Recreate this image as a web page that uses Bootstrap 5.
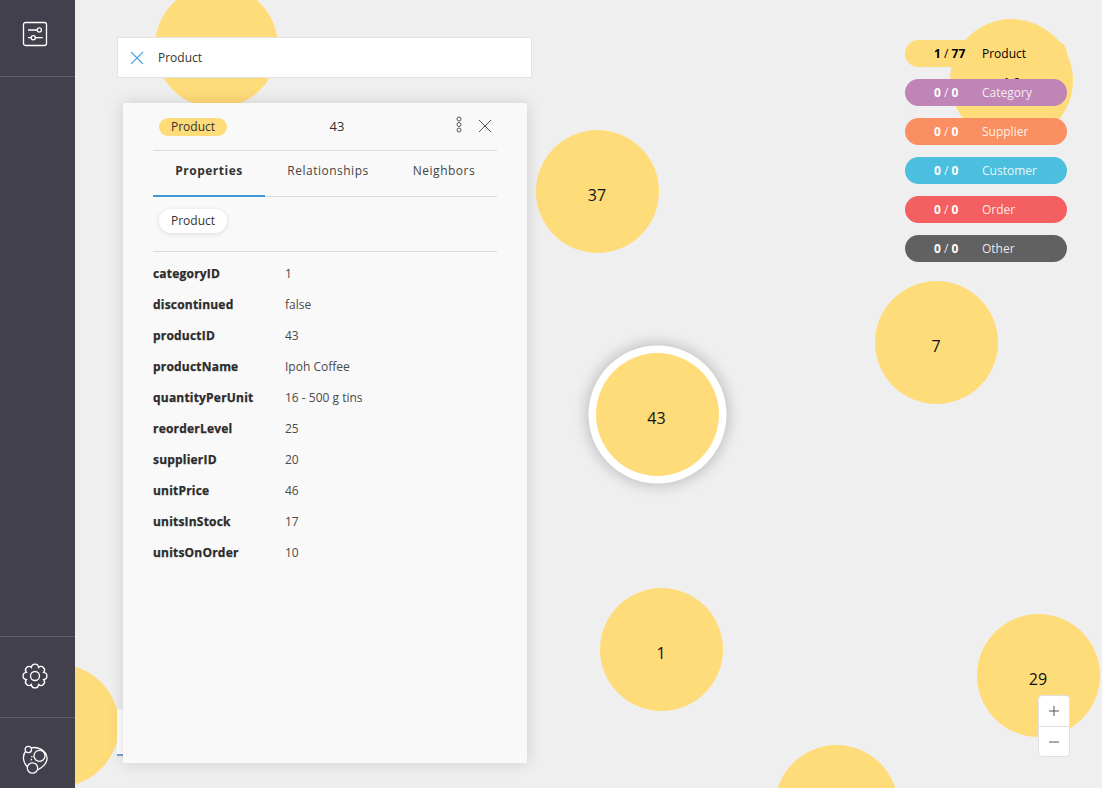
<!DOCTYPE html>
<html lang="en">

<head>
    <meta charset="UTF-8">
    <meta name="viewport" content="width=device-width, initial-scale=1.0">
    <title>Graph Explorer</title>
    <link href="https://cdn.jsdelivr.net/npm/bootstrap@5.3.0/dist/css/bootstrap.min.css" rel="stylesheet">
    <style>
        html, body { height: 100%; }
        body { font-family: "Open Sans", sans-serif; font-size: 12px; color: #333; background: #efefef; overflow: hidden; }
        .app-shell { height: 788px; }
        .side-rail { width: 75px; background: #43404d; }
        .rail-cell { height: 76px; padding: 0 5px 8px 0; }
        .rail-gap { border-top: 1px solid #5d5c6b; }
        .rail-end { height: 81px; border-top: 1px solid #5d5c6b; padding: 0 5px 3px 0; }
        .rail-end-last { height: 71px; border-top: 1px solid #5d5c6b; padding: 13px 5px 0 0; }
        .rail-icon { fill: none; stroke: #fff; stroke-width: 1.300; }
        .graph-area { background: #efefef; overflow: hidden; }
        .node-dot { position: absolute; width: 123px; height: 123px; border-radius: 50%; background: #ffdc7a; font-size: 16px; color: #111; padding: 6px 1px 0 0; }
        .node-picked { padding-top: 7px; box-shadow: 0 0 0 7.500px #fff, 0 0 14px 10px rgba(0, 0, 0, .2); }
        .search-box { position: absolute; left: 42px; top: 37px; width: 415px; height: 41px; background: #fff; border: 1px solid #e2e2e2; padding-left: 12px; gap: 14px; color: #333; }
        .ghost-tab { position: absolute; left: 42px; top: 709px; width: 20px; height: 47px; background: #fff; border-bottom: 2px solid #7a9fdc; }
        .info-panel { position: absolute; left: 48px; top: 103px; width: 404px; height: 660px; background: #f9f9f9; padding: 0 30px; box-shadow: 0 0 16px rgba(0, 0, 0, .14); border-radius: 2px; }
        .panel-head { height: 48px; border-bottom: 1px solid #dcdcdc; }
        .tag-chip { width: 68px; height: 18px; border-radius: 9px; background: #ffdc7a; line-height: 18px; text-align: center; margin-left: 6px; }
        .panel-title { font-size: 13px; width: 100%; text-align: center; margin-left: -8px; }
        .kebab-icon { margin-bottom: 4px; }
        .close-icon { margin: 0 5px 1px 15px; }
        .tab-strip { height: 46px; border-bottom: 1px solid #dcdcdc; }
        .tab-item { letter-spacing: .5px; color: #444; line-height: 1; padding-top: 14px; height: 46px; text-align: center; }
        .tab-on { width: 112px; font-weight: 700; color: #333; border-bottom: 2px solid #3e97d8; }
        .tab-mid { width: 126px; }
        .tab-end { width: 106px; }
        .label-row { height: 55px; border-bottom: 1px solid #dcdcdc; padding-left: 6px; padding-top: 12px; }
        .label-chip { width: 68px; height: 24px; line-height: 24px; text-align: center; border-radius: 12px; background: #fff; box-shadow: 0 1px 5px rgba(0, 0, 0, .12); }
        .prop-list { padding-top: 6px; }
        .prop-row { height: 31px; line-height: 31px; }
        .prop-key { width: 132px; font-weight: 700; letter-spacing: .2px; color: #2b2b2b; -webkit-text-stroke: .25px #2b2b2b; }
        .prop-val { color: #4a4a4a; }
        .legend-stack { position: absolute; left: 830px; top: 40px; width: 162px; gap: 12px; }
        .legend-pill { height: 27px; border-radius: 14px; color: rgba(255, 255, 255, .88); line-height: 27px; }
        .legend-num { width: 77px; padding-left: 29px; }
        .legend-num b { font-weight: 700; color: #fff; }
        .legend-dark, .legend-dark b { color: #000; }
        .zoom-box { position: absolute; left: 963px; top: 695px; width: 32px; height: 62px; background: #fff; border: 1px solid #e0e0e0; border-radius: 4px; }
        .zoom-btn { height: 30px; }
        .zoom-btn + .zoom-btn { border-top: 1px solid #e0e0e0; }
    </style>
</head>

<body>
    <div class="app-shell d-flex">
        <div class="side-rail d-flex flex-column flex-shrink-0">
            <div class="rail-cell d-flex align-items-center justify-content-center">
                <svg width="26" height="26" viewBox="0 0 26 26" class="rail-icon">
                    <rect x="1.500" y="1.500" width="23" height="23" rx="2" />
                    <path d="M6 9h9M6 16.700h3M13.700 16.700h7" />
                    <circle cx="17.300" cy="9" r="2.100" />
                    <circle cx="11.300" cy="16.700" r="2.100" />
                </svg>
            </div>
            <div class="rail-gap flex-grow-1"></div>
            <div class="rail-end d-flex align-items-center justify-content-center">
                <svg width="26" height="26" viewBox="0 0 26 26" class="rail-icon">
                    <path transform="translate(13 13) scale(1.040)" d="M8.310 -3.440C12.500 -3 12.500 3 8.310 3.440C10.960 6.720 6.720 10.960 3.440 8.310C3 12.500 -3 12.500 -3.440 8.310C-6.720 10.960 -10.960 6.720 -8.310 3.440C-12.500 3 -12.500 -3 -8.310 -3.440C-10.960 -6.720 -6.720 -10.960 -3.440 -8.310C-3 -12.500 3 -12.500 3.440 -8.310C6.720 -10.960 10.960 -6.720 8.310 -3.440Z" />
                    <circle cx="13" cy="13" r="4.500" />
                </svg>
            </div>
            <div class="rail-end-last d-flex align-items-center justify-content-center">
                <svg width="26" height="30" viewBox="0 0 26 30" class="rail-icon">
                    <path d="M9 2.800C16 1.500 24 5 25 13C25.500 18 20 23 15.500 25" />
                    <path d="M3.500 6.500C.5 10 .5 17 5.500 22" />
                    <circle cx="6.300" cy="4.500" r="3.200" />
                    <circle cx="17.500" cy="10.800" r="5.500" />
                    <circle cx="10.500" cy="23" r="5.200" />
                    <path d="M10 11l-1 6" stroke-dasharray="1.500 1.500" />
                </svg>
            </div>
        </div>

        <div class="graph-area flex-grow-1 position-relative">
            <div class="node-dot" style="left:80px;top:-15px"></div>
            <div class="node-dot d-flex align-items-center justify-content-center" style="left:875px;top:19px">16</div>
            <div class="node-dot d-flex align-items-center justify-content-center" style="left:461px;top:130px">37</div>
            <div class="node-dot d-flex align-items-center justify-content-center" style="left:800px;top:281px">7</div>
            <div class="node-dot node-picked d-flex align-items-center justify-content-center" style="left:520.500px;top:352.500px">43</div>
            <div class="node-dot d-flex align-items-center justify-content-center" style="left:525px;top:588px">1</div>
            <div class="node-dot d-flex align-items-center justify-content-center" style="left:902px;top:614px">29</div>
            <div class="node-dot" style="left:700px;top:745px"></div>
            <div class="node-dot" style="left:-79px;top:664px"></div>

            <div class="search-box d-flex align-items-center">
                <svg width="14" height="14" viewBox="0 0 14 14" fill="none" stroke="#4aa5e0" stroke-width="1.100">
                    <path d="M1 1l12 12M13 1L1 13" />
                </svg>
                <span>Product</span>
            </div>

            <div class="ghost-tab"></div>

            <div class="info-panel">
                <div class="panel-head d-flex align-items-center position-relative">
                    <div class="tag-chip flex-shrink-0">Product</div>
                    <div class="panel-title">43</div>
                    <svg class="kebab-icon flex-shrink-0" width="8" height="18" viewBox="0 0 8 18" fill="none" stroke="#555" stroke-width="1">
                        <circle cx="4" cy="3" r="2" />
                        <circle cx="4" cy="8.500" r="2" />
                        <circle cx="4" cy="14" r="2" />
                    </svg>
                    <svg class="close-icon flex-shrink-0" width="14" height="14" viewBox="0 0 14 14" fill="none" stroke="#555" stroke-width="1">
                        <path d="M1 1l12 12M13 1L1 13" />
                    </svg>
                </div>
                <div class="tab-strip d-flex">
                    <div class="tab-item tab-on">Properties</div>
                    <div class="tab-item tab-mid">Relationships</div>
                    <div class="tab-item tab-end">Neighbors</div>
                </div>
                <div class="label-row">
                    <div class="label-chip">Product</div>
                </div>
                <div class="prop-list">
                    <div class="prop-row d-flex"><div class="prop-key">categoryID</div><div class="prop-val">1</div></div>
                    <div class="prop-row d-flex"><div class="prop-key">discontinued</div><div class="prop-val">false</div></div>
                    <div class="prop-row d-flex"><div class="prop-key">productID</div><div class="prop-val">43</div></div>
                    <div class="prop-row d-flex"><div class="prop-key">productName</div><div class="prop-val">Ipoh Coffee</div></div>
                    <div class="prop-row d-flex"><div class="prop-key">quantityPerUnit</div><div class="prop-val">16 - 500 g tins</div></div>
                    <div class="prop-row d-flex"><div class="prop-key">reorderLevel</div><div class="prop-val">25</div></div>
                    <div class="prop-row d-flex"><div class="prop-key">supplierID</div><div class="prop-val">20</div></div>
                    <div class="prop-row d-flex"><div class="prop-key">unitPrice</div><div class="prop-val">46</div></div>
                    <div class="prop-row d-flex"><div class="prop-key">unitsInStock</div><div class="prop-val">17</div></div>
                    <div class="prop-row d-flex"><div class="prop-key">unitsOnOrder</div><div class="prop-val">10</div></div>
                </div>
            </div>

            <div class="legend-stack d-flex flex-column">
                <div class="legend-pill legend-dark d-flex" style="background:#ffdc7a"><div class="legend-num"><b>1</b> / <b>77</b></div><div>Product</div></div>
                <div class="legend-pill d-flex" style="background:#c084b6"><div class="legend-num"><b>0</b> / <b>0</b></div><div>Category</div></div>
                <div class="legend-pill d-flex" style="background:#fa8f62"><div class="legend-num"><b>0</b> / <b>0</b></div><div>Supplier</div></div>
                <div class="legend-pill d-flex" style="background:#4cbfdf"><div class="legend-num"><b>0</b> / <b>0</b></div><div>Customer</div></div>
                <div class="legend-pill d-flex" style="background:#f45f61"><div class="legend-num"><b>0</b> / <b>0</b></div><div>Order</div></div>
                <div class="legend-pill d-flex" style="background:#616161"><div class="legend-num"><b>0</b> / <b>0</b></div><div>Other</div></div>
            </div>

            <div class="zoom-box d-flex flex-column">
                <div class="zoom-btn d-flex align-items-center justify-content-center">
                    <svg width="10" height="10" viewBox="0 0 10 10" stroke="#555" stroke-width="1"><path d="M0 5h10M5 0v10" /></svg>
                </div>
                <div class="zoom-btn d-flex align-items-center justify-content-center">
                    <svg width="10" height="10" viewBox="0 0 10 10" stroke="#555" stroke-width="1"><path d="M0 5h10" /></svg>
                </div>
            </div>
        </div>
    </div>

    <script src="https://cdn.jsdelivr.net/npm/bootstrap@5.3.0/dist/js/bootstrap.bundle.min.js"></script>
</body>

</html>
